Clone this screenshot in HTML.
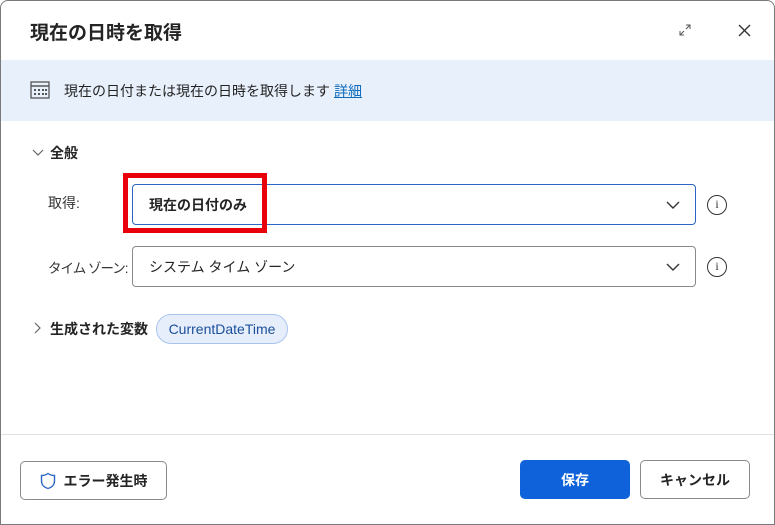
<!DOCTYPE html>
<html><head><meta charset="utf-8"><style>
*{box-sizing:border-box;margin:0;padding:0}
body{width:775px;height:525px;background:#fff;font-family:"Liberation Sans","Noto Sans CJK JP",sans-serif;color:#242424;position:relative;overflow:hidden}
.win{position:absolute;left:0;top:0;width:775px;height:525px;border:1px solid #7a7a7a;border-radius:8px 8px 0 0;background:#fff}
.abs{position:absolute}
.title{left:30px;top:18px;font-size:19px;font-weight:bold;color:#242424}
.banner{left:1px;top:60px;width:773px;height:61px;background:#e8f0fb}
.btxt{left:64px;top:81px;font-size:14px;color:#242424}
.btxt a{color:#0f6cbd;text-decoration:underline;margin-left:4px}
.lbl{font-size:14px;color:#333}
.sel{left:132px;width:564px;height:41px;border:1px solid #8a8a8a;border-radius:4px;font-size:14px;padding:0 16px;display:flex;align-items:center}
.chev{position:absolute;right:14px;top:12px}
.info{width:20px;height:20px;border:1.5px solid #333;border-radius:50%;font-size:12px;text-align:center;line-height:17px;font-family:"Liberation Serif",serif;color:#333}
.chip{left:156px;top:314px;width:132px;height:30px;border:1px solid #a9c4ee;background:#e6eefb;border-radius:15px;color:#1a4e9a;font-size:14px;text-align:center;line-height:28px}
.btn{height:39px;border-radius:5px;font-size:14px;font-weight:bold;display:flex;align-items:center;justify-content:center}
</style></head><body>
<div class="win"></div>
<div class="abs title">現在の日時を取得</div>
<svg class="abs" style="left:678px;top:23px" width="14" height="14" viewBox="0 0 14 14"><path d="M8 2h4v4M12 2L8 6M2 8v4h4M2 12l4-4" stroke="#555" fill="none" stroke-width="1"/></svg>
<svg class="abs" style="left:737px;top:23px" width="15" height="15" viewBox="0 0 15 15"><path d="M2 2L13 13M13 2L2 13" stroke="#333" stroke-width="1.4"/></svg>
<div class="abs banner"></div>
<svg class="abs" style="left:30px;top:81px" width="20" height="18" viewBox="0 0 20 18"><rect x="1" y="1" width="18" height="16" fill="none" stroke="#555" stroke-width="1.3"/><line x1="1" y1="5" x2="19" y2="5" stroke="#555" stroke-width="1.5"/><g fill="#555"><rect x="4" y="8" width="2" height="2"/><rect x="8" y="8" width="2" height="2"/><rect x="12" y="8" width="2" height="2"/><rect x="4" y="12" width="2" height="2"/><rect x="8" y="12" width="2" height="2"/><rect x="12" y="12" width="2" height="2"/><rect x="15" y="8" width="2" height="2"/><rect x="15" y="12" width="2" height="2"/></g></svg>
<div class="abs btxt">現在の日付または現在の日時を取得します<a>詳細</a></div>
<svg class="abs" style="left:32px;top:147px" width="12" height="10" viewBox="0 0 12 10"><path d="M1 3l5 5 5-5" stroke="#666" fill="none" stroke-width="1.2"/></svg>
<div class="abs" style="left:50px;top:143px;font-size:14px;font-weight:bold">全般</div>
<div class="abs lbl" style="left:48px;top:193px">取得:</div>
<div class="abs sel" style="top:184px;border-color:#2b66c4;font-weight:bold">現在の日付のみ<svg class="chev" width="16" height="16" viewBox="0 0 16 16"><path d="M2 5l6 6 6-6" stroke="#333" fill="none" stroke-width="1.4"/></svg></div>
<div class="abs" style="left:123px;top:173px;width:144px;height:60px;border:5px solid #e8000b"></div>
<div class="abs info" style="left:707px;top:195px">i</div>
<div class="abs lbl" style="left:48px;top:257px;letter-spacing:-1px;font-size:13.5px">タイム ゾーン:</div>
<div class="abs sel" style="top:246px">システム タイム ゾーン<svg class="chev" width="16" height="16" viewBox="0 0 16 16"><path d="M2 5l6 6 6-6" stroke="#333" fill="none" stroke-width="1.4"/></svg></div>
<div class="abs info" style="left:707px;top:257px">i</div>
<svg class="abs" style="left:32px;top:322px" width="10" height="12" viewBox="0 0 10 12"><path d="M3 1l5 5-5 5" stroke="#666" fill="none" stroke-width="1.2"/></svg>
<div class="abs" style="left:50px;top:319px;font-size:14px;font-weight:bold">生成された変数</div>
<div class="abs chip">CurrentDateTime</div>
<div class="abs" style="left:1px;top:434px;width:773px;height:1px;background:#e1e1e1"></div>
<div class="abs btn" style="left:20px;top:461px;width:147px;border:1px solid #8a8a8a;font-weight:bold"><svg width="16" height="18" viewBox="0 0 16 18" style="margin-right:8px"><path d="M8 1.5C6 3 4 3.5 1.5 3.5V9c0 4 3 6.5 6.5 7.5 3.5-1 6.5-3.5 6.5-7.5V3.5C12 3.5 10 3 8 1.5z" fill="none" stroke="#2b66c4" stroke-width="1.4"/></svg>エラー発生時</div>
<div class="abs btn" style="left:520px;top:460px;width:110px;background:#0f62d9;color:#fff">保存</div>
<div class="abs btn" style="left:640px;top:460px;width:110px;border:1px solid #8a8a8a">キャンセル</div>
</body></html>
